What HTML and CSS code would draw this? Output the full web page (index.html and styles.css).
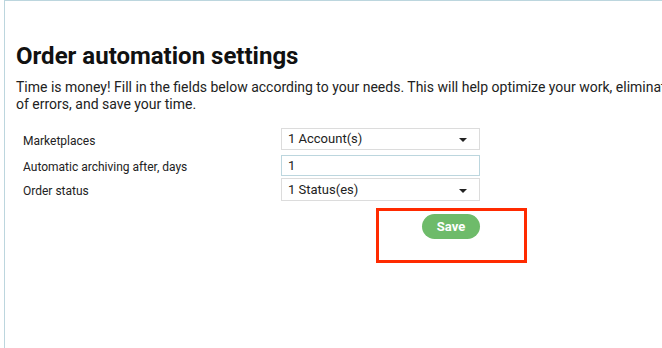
FILE: index.html
```html
<!DOCTYPE html>
<html lang="en">
<head>
    <meta charset="UTF-8">
    <meta name="viewport" content="width=device-width, initial-scale=1.0">
    <title>Order automation settings</title>
    <link rel="stylesheet" href="styles.css">
</head>
<body>
<div class="panel">
    <h1>Order automation settings</h1>
    <p class="intro">Time is money! Fill in the fields below according to your needs. This will help optimize your work, eliminate the risk of errors, and save your time.</p>
    <div class="form">
        <div class="row first">
            <label>Marketplaces</label>
            <div class="field select">1 Account(s)<span class="caret"></span></div>
        </div>
        <div class="row second">
            <label>Automatic archiving after, days</label>
            <div class="field input">1</div>
        </div>
        <div class="row third">
            <label>Order status</label>
            <div class="field select">1 Status(es)<span class="caret"></span></div>
        </div>
        <div class="actions">
            <button class="save">Save</button>
            <div class="highlight"></div>
        </div>
    </div>
</div>
</body>
</html>
```

FILE: styles.css
```css
html, body {
    margin: 0;
    padding: 0;
    overflow: hidden;
    background: #ffffff;
}
body {
    font-family: Roboto, "Liberation Sans", sans-serif;
    color: #222;
    height: 348px;
}
.panel {
    margin-left: 4px;
    width: 760px;
    height: 360px;
    border-top: 1px solid #bcd6de;
    border-left: 1px solid #bcd6de;
    padding: 40px 0 0 11px;
    box-sizing: border-box;
}
h1 {
    margin: 0;
    font-size: 24px;
    font-weight: 700;
    line-height: 30px;
    color: #111;
}
.intro {
    margin: 8px 0 0;
    font-size: 14px;
    line-height: 17px;
    width: 720px;
    color: #222;
}
.form {
    margin-top: 15px;
    width: 470px;
    padding-left: 7px;
}
.row {
    display: grid;
    grid-template-columns: 258px 199px;
    align-items: center;
    font-size: 12px;
}
.row label {
    padding-top: 3px;
}
.row.first { margin-bottom: 5px; }
.row.second { margin-bottom: 2px; }
.field {
    height: 22px;
    box-sizing: border-box;
    border: 1px solid #dcdcdc;
    padding: 0 6px;
    line-height: 20px;
    font-size: 13px;
    color: #222;
    position: relative;
}
.input {
    border-color: #bcd6de;
    height: 21px;
    line-height: 19px;
}
.third .field {
    height: 23px;
    line-height: 21px;
}
.caret {
    position: absolute;
    right: 12px;
    top: 9px;
    border-left: 4px solid transparent;
    border-right: 4px solid transparent;
    border-top: 4px solid #222;
}
.third .caret {
    top: 10px;
}
.actions {
    position: relative;
    padding-left: 399px;
    margin-top: 13px;
}
.save {
    background: #6ebb6a;
    color: #fff;
    border: none;
    border-radius: 13px;
    width: 58px;
    height: 25px;
    font-family: Roboto, "Liberation Sans", sans-serif;
    font-weight: 700;
    font-size: 13px;
}
.highlight {
    position: absolute;
    left: 353px;
    top: -6px;
    width: 151px;
    height: 55px;
    box-sizing: border-box;
    border: 3px solid #ff2a00;
}
```
